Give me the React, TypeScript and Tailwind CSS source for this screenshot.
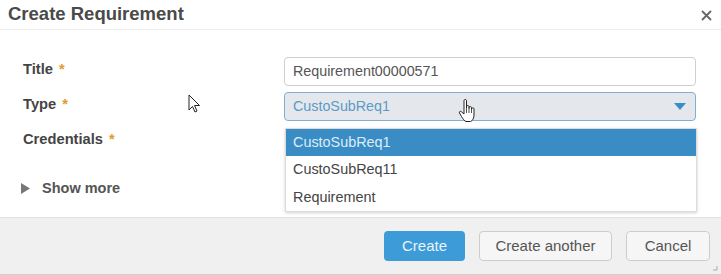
import React from "react";

const font = { fontFamily: '"Liberation Sans", Arial, sans-serif' };

function Label({ text }: { text: string }) {
  return (
    <div className="h-[29px] flex items-center text-[14.7px] font-bold text-[#444]">
      <span>{text}</span>
      <span className="ml-[6px] text-[#e39a2e]">*</span>
    </div>
  );
}

export default function App() {
  return (
    <div style={font} className="relative w-[721px] h-[275px] bg-white overflow-hidden flex flex-col">
      {/* Header */}
      <div className="h-[30px] shrink-0 border-b border-[#ececec] flex items-center justify-between pl-[8px] pr-[10px]">
        <span className="text-[18.5px] font-bold text-[#4a4a4a] leading-none -mt-[1px]">Create Requirement</span>
        <svg width="11" height="11" viewBox="0 0 11 11" className="mt-[1px] -mr-[1px]">
          <path d="M1.5 1.5 L9.5 9.5 M9.5 1.5 L1.5 9.5" stroke="#666" strokeWidth="1.8" strokeLinecap="round" />
        </svg>
      </div>

      {/* Body */}
      <div className="relative flex-1 flex pt-[27px]">
        <div className="w-[284px] shrink-0 pl-[23px] flex flex-col gap-[6px] -mt-[2px]">
          <Label text="Title" />
          <Label text="Type" />
          <Label text="Credentials" />
          <div className="mt-[18px] flex items-center text-[14.5px] font-bold text-[#555]">
            <svg width="9" height="11" viewBox="0 0 9 11" className="-ml-[2px] mr-[12px]">
              <path d="M0 0 L9 5.5 L0 11 Z" fill="#777" />
            </svg>
            <span>Show more</span>
          </div>
        </div>
        <div className="w-[412px] flex flex-col gap-[6px]">
          <div className="h-[29px] border border-[#cfcfcf] rounded-[4px] bg-white flex items-center px-[8px] text-[14.3px] text-[#555]">
            Requirement00000571
          </div>
          <div className="relative">
            <div className="h-[29px] border border-[#7fb0d3] rounded-[4px] bg-[#e4e8ec] flex items-center justify-between pl-[8px] pr-[9px] text-[14.3px] text-[#5b9ac7]">
              <span>CustoSubReq1</span>
              <svg width="12" height="7" viewBox="0 0 12 7">
                <path d="M0 0 L12 0 L6 7 Z" fill="#3a8ec8" />
              </svg>
            </div>
            {/* Dropdown list */}
            <div className="absolute left-[1px] top-[36px] w-[412px] bg-white border border-[#dcdcdc] shadow-[0_1px_3px_rgba(0,0,0,0.18)] text-[14.4px] z-10">
              <div className="h-[27px] bg-[#3a8cc5] text-[#dcecf8] flex items-center px-[7px]">CustoSubReq1</div>
              <div className="h-[28px] text-[#444] flex items-center px-[7px]">CustoSubReq11</div>
              <div className="h-[27px] text-[#444] flex items-center px-[7px]">Requirement</div>
            </div>
          </div>
        </div>
        {/* Arrow cursor */}
        <svg width="13" height="20" viewBox="0 0 13 20" className="absolute left-[188px] top-[64px]">
          <path d="M1 1 L1 16 L4.5 12.5 L7 18 L9 17 L6.5 11.5 L11.5 11.5 Z" fill="#fff" stroke="#222" strokeWidth="1" strokeLinejoin="round" />
        </svg>
        {/* Hand cursor */}
        <svg width="20" height="26" viewBox="0 0 20 26" className="absolute left-[458px] top-[68px] z-20">
          <path d="M6 2.5 C6 1.2 8.5 1.2 8.5 2.5 L8.5 10 L8.5 8.5 C8.5 7.3 11 7.3 11 8.5 L11 10.5 L11 9.5 C11 8.3 13.5 8.3 13.5 9.5 L13.5 11.5 L13.5 10.8 C13.5 9.6 16 9.6 16 10.8 L16 17 C16 20 14.5 23 12.5 23.5 L8 23.5 C6.5 23 5 21 3.5 18.5 L1.5 15 C0.8 13.8 2.3 12.6 3.5 13.8 L6 16 Z" fill="#fff" stroke="#222" strokeWidth="1" strokeLinejoin="round" />
          <path d="M8.5 10 L8.5 15 M11 10.5 L11 15 M13.5 11.5 L13.5 15" stroke="#222" strokeWidth="0.8" />
        </svg>
      </div>

      {/* Footer */}
      <div className="h-[58px] shrink-0 bg-[#f0f0f0] border-t border-[#e2e2e2] border-b border-b-[#cfcfcf] flex items-center justify-end pr-[11px] gap-[14px] relative">
        <button className="w-[81px] h-[30px] rounded-[4px] bg-[#3d9bd7] text-[#eaf4fb] text-[15px]">Create</button>
        <button className="w-[133px] h-[30px] rounded-[4px] bg-[#f6f6f6] border border-[#cdcdcd] text-[#555] text-[15px]">Create another</button>
        <button className="w-[84px] h-[30px] rounded-[4px] bg-[#f6f6f6] border border-[#cdcdcd] text-[#555] text-[15px]">Cancel</button>
        <svg width="5" height="5" viewBox="0 0 5 5" className="absolute right-[3px] bottom-[3px]">
          <path d="M4 0 L4 4 L0 4" stroke="#aaa" strokeWidth="1" fill="none" />
        </svg>
      </div>
    </div>
  );
}
